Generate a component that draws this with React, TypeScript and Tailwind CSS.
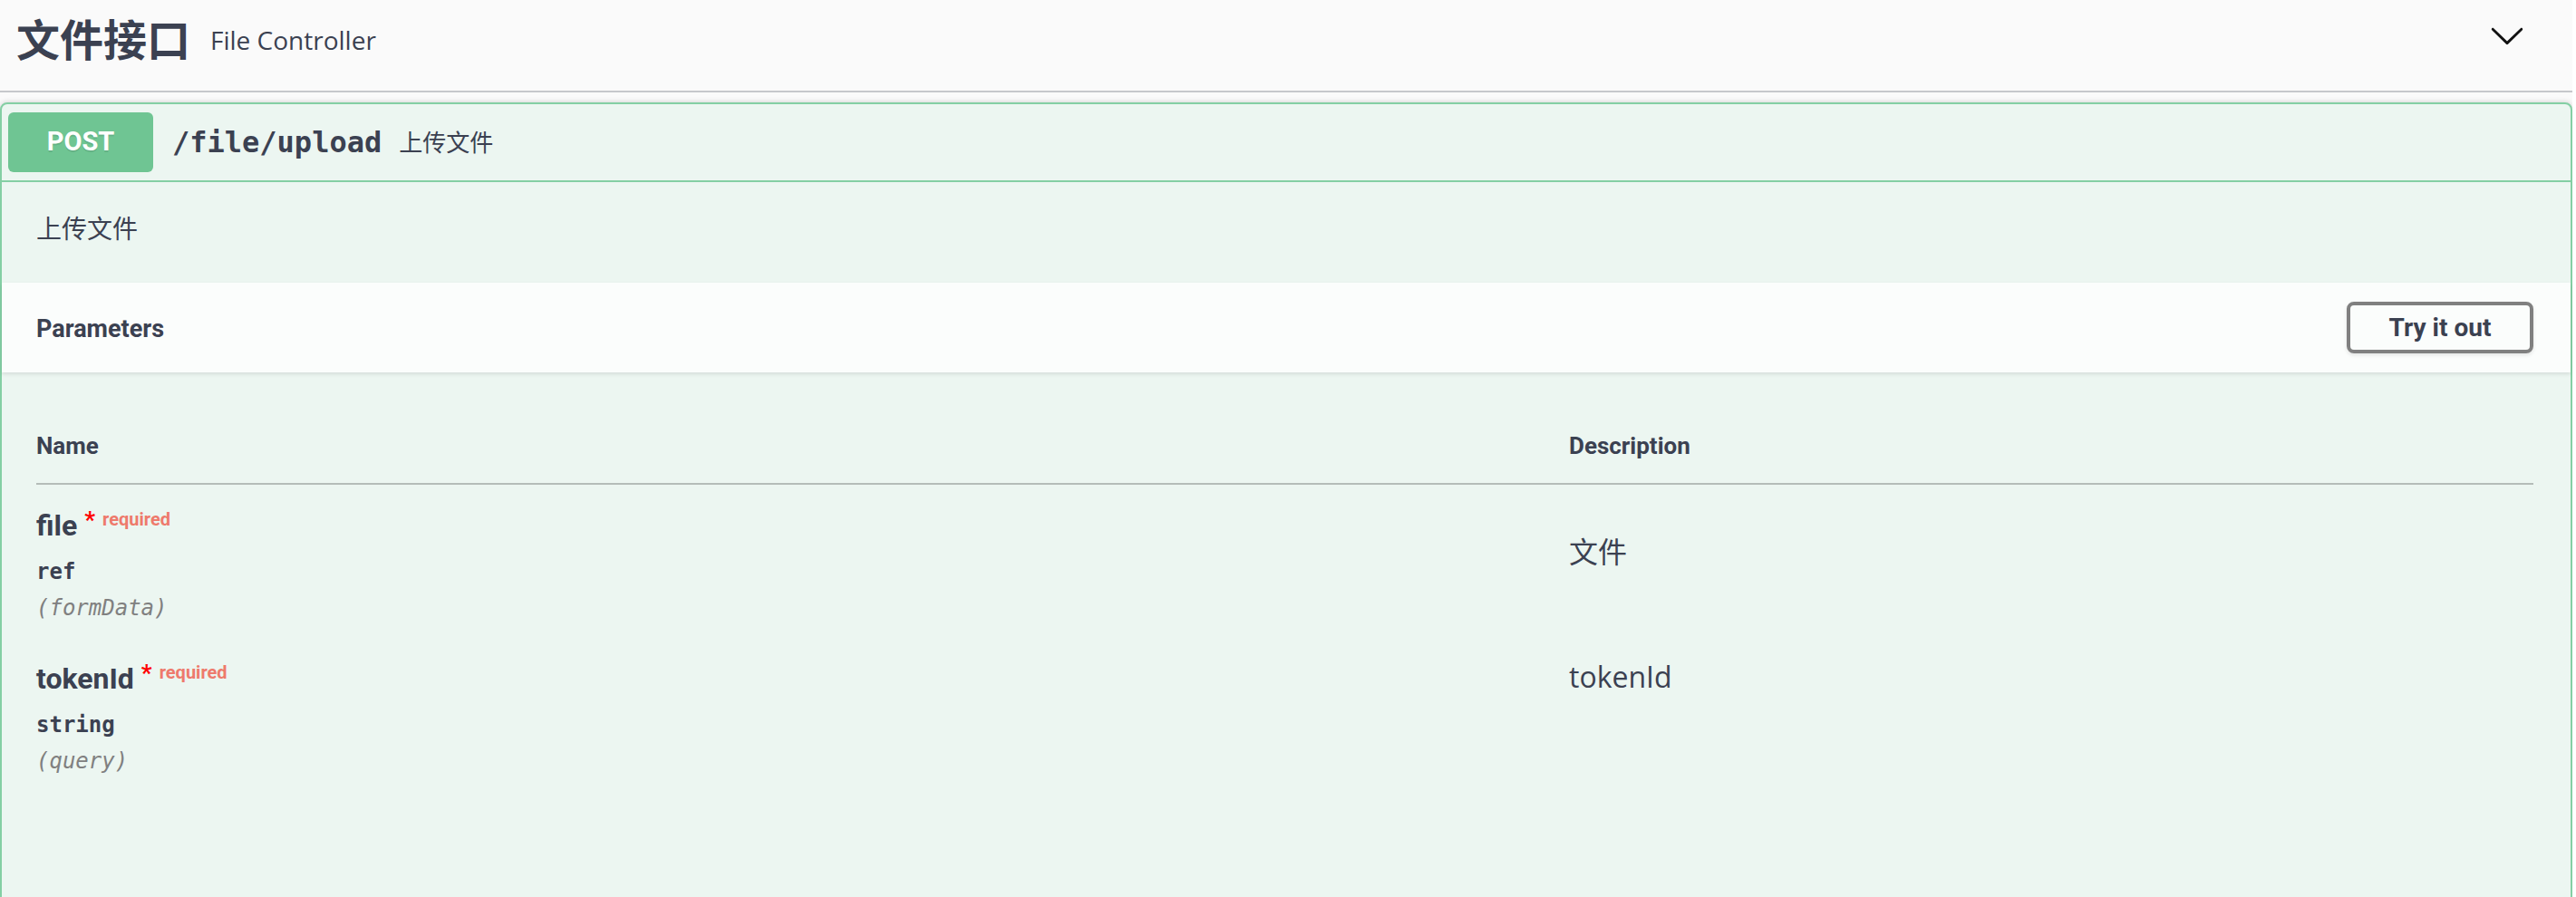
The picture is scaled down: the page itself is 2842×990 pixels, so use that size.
import React from "react";

// Fonts used across the page
const cjk = "font-['Open_Sans','Noto_Sans_CJK_SC',sans-serif]";
const head = "font-['Roboto','Noto_Sans_CJK_SC',sans-serif]";
const mono = "font-['DejaVu_Sans_Mono',monospace]";

type Param = {
  name: string;
  type: string;
  location: string;
  description: string;
  descOffset: string;
};

const params: Param[] = [
  { name: "file", type: "ref", location: "(formData)", description: "文件", descOffset: "mt-[30px] h-[48px] text-[32px]" },
  { name: "tokenId", type: "string", location: "(query)", description: "tokenId", descOffset: "h-[46px] text-[32px]" },
];

function Chevron() {
  return (
    <svg viewBox="0 0 20 20" className="h-10 w-10 mb-[22px]" fill="#111">
      <path d="M17.418 6.109c.272-.268.709-.268.979 0s.271.701 0 .969l-7.908 7.83c-.27.268-.707.268-.979 0l-7.908-7.83c-.27-.268-.27-.701 0-.969.271-.268.709-.268.979 0L10 13.25l7.418-7.141z" />
    </svg>
  );
}

export default function App() {
  return (
    <div className="w-[2838px] h-[990px] overflow-hidden bg-[#fafafa] text-[#3b4151]">
      {/* Tag header */}
      <div className="flex h-[102px] items-center border-b-2 border-[#c6c8cb] pl-[18px] pr-[52px]">
        <div className="mb-[12px] flex items-center">
          <h3 className={`${cjk} text-[48px] font-bold leading-none`}>文件接口</h3>
          <small className={`${cjk} ml-[22px] text-[28px] leading-none`}>File Controller</small>
        </div>
        <div className="flex-1" />
        <Chevron />
      </div>

      {/* Operation block */}
      <div className="mt-[11px] rounded-[8px] border-2 border-[#84cfa4] bg-[#ecf6f1] shadow-[0_0_6px_rgba(0,0,0,0.19)]">
        {/* Summary */}
        <div className="flex h-[86px] items-center border-b-2 border-[#84cfa4] pl-[7px]">
          <span className={`${head} flex h-[66px] w-[160px] items-center justify-center rounded-[6px] bg-[#6fc593] text-[29px] font-bold text-white [text-shadow:0_2px_0_rgba(0,0,0,0.1)]`}>
            POST
          </span>
          <span className={`${mono} ml-[21px] text-[32px] font-bold`}>/file/upload</span>
          <span className={`${cjk} ml-[19px] text-[26px]`}>上传文件</span>
        </div>

        {/* Description */}
        <div className={`${cjk} flex h-[111px] items-center px-[38px] pb-[10px] text-[28px]`}>上传文件</div>

        {/* Parameters header */}
        <div className="flex h-[99px] items-center justify-between bg-white/80 pl-[38px] pr-[41px] shadow-[0_2px_4px_rgba(0,0,0,0.1)]">
          <h4 className={`${head} mt-[3px] text-[27px] font-bold`}>Parameters</h4>
          <button className={`${head} h-[57px] w-[206px] rounded-[8px] border-4 border-[#808080] text-[28px] font-bold shadow-[0_2px_4px_rgba(0,0,0,0.1)]`}>
            Try it out
          </button>
        </div>

        {/* Parameters table */}
        <div className="pl-[38px] pr-[41px] pt-[40px] pb-[200px]">
          <div className={`${head} grid h-[84px] grid-cols-[1691px_1fr] items-center border-b-2 border-[#b4bcb8] text-[26px] font-bold`}>
            <div>Name</div>
            <div>Description</div>
          </div>

          {params.map((p) => (
            <div key={p.name} className="grid grid-cols-[1691px_1fr] pt-[20px] pb-[16px]">
              <div>
                <div className="flex h-[50px] items-center">
                  <span className={`${head} text-[32px] font-bold`}>{p.name}</span>
                  <span className={`${head} ml-[8px] -mt-[12px] text-[26px] font-bold text-[#ff0000]`}>*</span>
                  <span className={`${head} ml-[8px] -mt-[14px] text-[20px] font-bold text-[#ee7a6c]`}>required</span>
                </div>
                <div className={`${mono} mt-[3px] flex h-[46px] items-center text-[24px] font-semibold`}>{p.type}</div>
                <div className={`${mono} flex h-[34px] items-center text-[24px] italic text-[#808080]`}>{p.location}</div>
              </div>
              <div className={`${cjk} flex items-center ${p.descOffset}`}>{p.description}</div>
            </div>
          ))}
        </div>
      </div>
    </div>
  );
}
